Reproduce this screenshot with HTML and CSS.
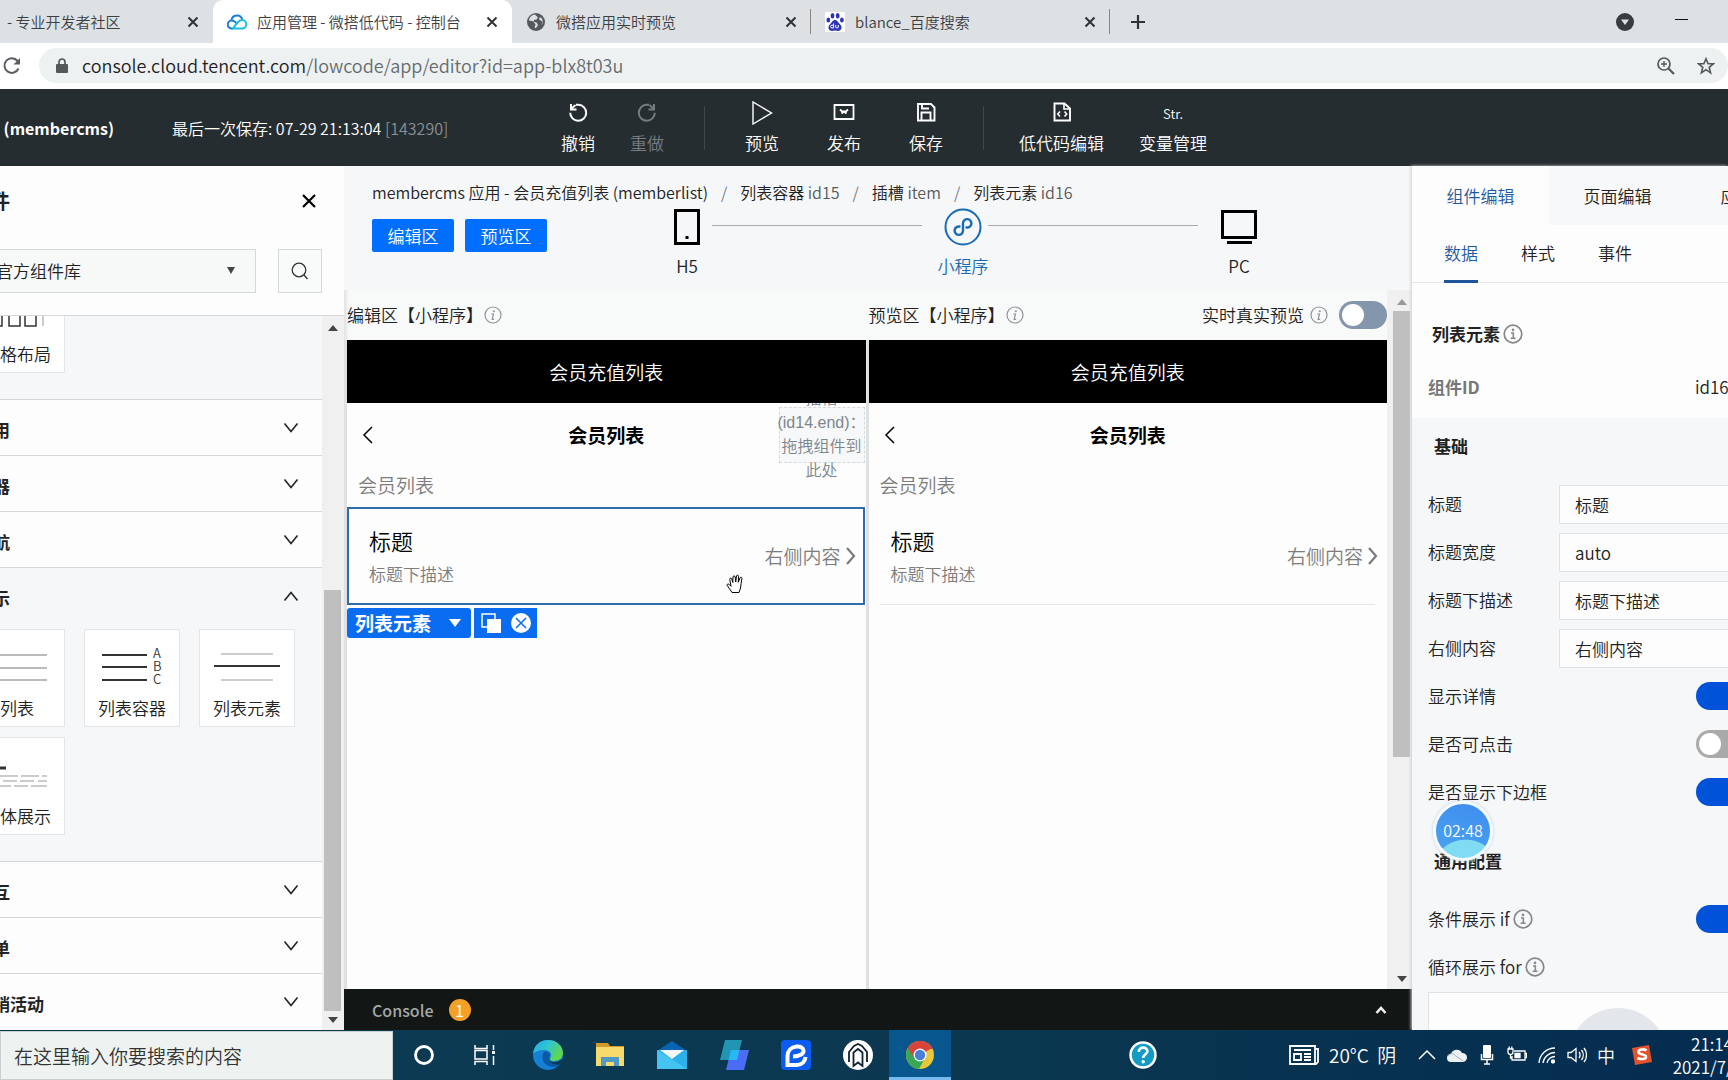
FILE: index.html
```html
<!DOCTYPE html>
<html lang="zh-CN">
<head>
<meta charset="utf-8">
<title>应用管理 - 微搭低代码 - 控制台</title>
<link rel="stylesheet" href="styles.css">
</head>
<body>
<svg class="defs" aria-hidden="true">
  <symbol id="i-close" viewBox="0 0 16 16"><path d="M3.500 3.500l9 9M12.500 3.500l-9 9" fill="none" stroke="currentColor" stroke-width="2"/></symbol>
  <symbol id="i-down" viewBox="0 0 16 16"><path d="M1.500 3.500L8 11.500l6.500-8" fill="none" stroke="currentColor" stroke-width="1.600"/></symbol>
  <symbol id="i-up" viewBox="0 0 16 16"><path d="M1.500 12.500L8 4.500l6.500 8" fill="none" stroke="currentColor" stroke-width="1.600"/></symbol>
  <symbol id="i-info" viewBox="0 0 18 18"><circle cx="9" cy="9" r="8" fill="none" stroke="currentColor" stroke-width="1.200"/><circle cx="9.800" cy="5.200" r="1" fill="currentColor"/><path d="M7.300 8h2.200l-1.300 5.300h2" fill="none" stroke="currentColor" stroke-width="1.200"/></symbol>
  <symbol id="i-info-b" viewBox="0 0 20 20"><circle cx="10" cy="10" r="8.800" fill="none" stroke="currentColor" stroke-width="1.700"/><circle cx="10" cy="5.900" r="1.300" fill="currentColor"/><path d="M8 9h2.300v5.200M7.600 14.300h5" fill="none" stroke="currentColor" stroke-width="1.600"/></symbol>
  <symbol id="i-back" viewBox="0 0 12 18"><path d="M10 1L2 9l8 8" fill="none" stroke="currentColor" stroke-width="1.500"/></symbol>
  <symbol id="i-more" viewBox="0 0 12 20"><path d="M2 2l7 8-7 8" fill="none" stroke="currentColor" stroke-width="2.200"/></symbol>
</svg>

<header class="browser">
  <div class="tabs">
    <div class="tab first"><span class="tab-name">- 专业开发者社区</span><button class="x" aria-label="关闭"><svg><use href="#i-close"/></svg></button></div>
    <div class="tab active">
      <svg class="fav" viewBox="0 0 20 20" fill="none" stroke-width="2"><path d="M6 16.500H5a4 4 0 0 1-.5-8 5.500 5.500 0 0 1 10.800-1" stroke="#1b7fd8"/><path d="M5 8.500c2 0 3.500 1.500 5.500 3.500" stroke="#1b7fd8"/><path d="M6 16.500h9a4.300 4.300 0 0 0 0-8.600c-2 0-3.300 1.300-4.500 2.600z" stroke="#19c0d8"/></svg>
      <span class="tab-name">应用管理 - 微搭低代码 - 控制台</span><button class="x" aria-label="关闭"><svg><use href="#i-close"/></svg></button></div>
    <div class="tab sep">
      <svg class="fav" viewBox="0 0 20 20"><circle cx="10" cy="10" r="9" fill="#55595c"/><path d="M9 2.500C5 3 3 6 3 8.500l4 .8 2.500 3L8.500 16c2 .5 3-2 3.500-3l-1.500-2.500-3-.8L8 8l2.500-.5 1.500-2zM14 5l-1 2.500 3.500 2-1 3.500c2-2 2-6-1.500-8z" fill="#dde1e4"/></svg>
      <span class="tab-name">微搭应用实时预览</span><button class="x" aria-label="关闭"><svg><use href="#i-close"/></svg></button></div>
    <div class="tab sep">
      <svg class="fav" viewBox="0 0 20 20"><path d="M0 0h20v20H0z" fill="#fff"/><g fill="#2a35b8"><ellipse cx="7.500" cy="3.700" rx="1.900" ry="2.700"/><ellipse cx="12.700" cy="3.700" rx="1.900" ry="2.700"/><ellipse cx="3.300" cy="8" rx="1.900" ry="2.500"/><ellipse cx="16.900" cy="8" rx="1.900" ry="2.500"/><path d="M10 8c2.500 0 3 2.500 5 4.300 2.500 2.200 1.800 6-1 6.500-1.500.3-2.500-.3-4-.3s-2.500.6-4 .3c-2.800-.5-3.500-4.300-1-6.500C7 10.500 7.500 8 10 8z"/></g><path d="M8.600 11.500V16H7a1.300 1.300 0 0 1 0-2.800h1.600M10.800 13v2.200c0 1 2.500 1 2.500 0V13" fill="none" stroke="#fff"/></svg>
      <span class="tab-name">blance_百度搜索</span><button class="x" aria-label="关闭"><svg><use href="#i-close"/></svg></button></div>
    <button class="new-tab" aria-label="新标签页"><svg viewBox="0 0 16 16"><path d="M8 1v14M1 8h14" stroke="#303336" stroke-width="2.200"/></svg></button>
    <div class="win">
      <svg class="s18" viewBox="0 0 18 18"><circle cx="9" cy="9" r="9" fill="#383c40"/><path d="M5 6.500h8L9 12z" fill="#dde1e4"/></svg>
      <svg class="s14" viewBox="0 0 14 14"><path d="M0 4.500h13" stroke="#111"/></svg>
    </div>
  </div>
  <div class="address">
    <button class="reload" aria-label="重新加载"><svg class="s20" viewBox="0 0 20 20"><path d="M16.500 12.500a7.300 7.300 0 1 1-1-7.500l1.500 1.500" fill="none" stroke="#5a5e62" stroke-width="2"/><path d="M18 2v6.500h-6.500z" fill="#5a5e62"/></svg></button>
    <div class="omni">
      <svg class="lock" viewBox="0 0 12 16"><path d="M1 6h10a1 1 0 0 1 1 1v7a1 1 0 0 1-1 1H1a1 1 0 0 1-1-1V7a1 1 0 0 1 1-1z" fill="#54585b"/><path d="M3 6V4a3 3 0 0 1 6 0v2" fill="none" stroke="#54585b" stroke-width="1.700"/></svg>
      <span class="url"><b>console.cloud.tencent.com</b>/lowcode/app/editor?id=app-blx8t03u</span>
      <svg class="s18" viewBox="0 0 18 18" fill="none" stroke="#54585b"><circle cx="7" cy="7" r="6" stroke-width="1.700"/><path d="M11.500 11.500L17 17" stroke-width="2.200"/><path d="M4 7h6M7 4v6" stroke-width="1.300"/></svg>
      <svg class="s18" viewBox="0 0 18 18"><path d="M9 1.800l2.100 5h5.200l-4.100 3.500 1.400 5.600L9 12.700l-4.600 3.200 1.400-5.600L1.700 6.800h5.200z" fill="none" stroke="#54585b" stroke-width="1.600"/></svg>
    </div>
  </div>
</header>

<div class="app-bar">
  <div class="app-info"><strong>会员后台 (membercms)</strong><span>最后一次保存: 07-29 21:13:04 <i>[143290]</i></span></div>
  <nav class="tools">
    <button><svg viewBox="0 0 22 22" fill="none" stroke="currentColor" stroke-width="2"><path d="M9 3.800h2.500a8 8 0 1 1-8.300 8"/><path d="M4 3v5.500h5.500"/><path d="M4 8L8.500 4"/></svg>撤销</button>
    <button disabled><svg viewBox="0 0 22 22" fill="none" stroke="currentColor" stroke-width="2"><path d="M13 3.800h-2.500a8 8 0 1 0 8.300 8"/><path d="M18 3v5.500h-5.500"/><path d="M18 8l-4.500-4"/></svg>重做</button>
    <span class="rule"></span>
    <button><svg class="big" viewBox="0 0 24 24" fill="none" stroke="currentColor" stroke-width="1.400"><path d="M3 1v22l18.500-11z"/></svg>预览</button>
    <button class="mid"><svg viewBox="0 0 22 22" fill="none" stroke="currentColor" stroke-width="1.800"><path d="M1.500 4h19v14h-19z"/><path d="M7 8.500l2 1.800h4l2-1.800M8.500 12.500l2.500-2 2.500 2"/></svg>发布</button>
    <button class="mid"><svg viewBox="0 0 22 22" fill="none" stroke="currentColor" stroke-width="1.900"><path d="M3 3h13l3.500 3.500V19.500H3z"/><path d="M6.500 19v-7.500h9V19M7 3v4.500h7"/></svg>保存</button>
    <span class="rule end"></span>
    <button><svg viewBox="0 0 22 22" fill="none" stroke="currentColor" stroke-width="1.900"><path d="M3.500 2.500h10L19 7.500v12H3.500z"/><path d="M13 3v5h5.500M9 10.500L6.800 13 9 15.500M13.500 10.500l2.200 2.500-2.200 2.500" stroke-width="1.600"/></svg>低代码编辑</button>
    <button><span class="str">Str.</span>变量管理</button>
  </nav>
</div>

<div class="workspace">
  <aside class="library">
    <div class="library-in">
      <div class="lib-head"><h2>组件</h2><button class="plain" aria-label="关闭"><svg class="s20" viewBox="0 0 20 20"><path d="M4 4l12 12M16 4L4 16" stroke="#000" stroke-width="2.200"/></svg></button></div>
      <div class="lib-find">
        <div class="pick"><select aria-label="组件库"><option>官方组件库</option></select><svg viewBox="0 0 8 8"><path d="M0 0h8L4 7z" fill="#444"/></svg></div>
        <button class="find" aria-label="搜索"><svg class="s18" viewBox="0 0 18 18" fill="none" stroke="#333" stroke-width="1.300"><circle cx="8" cy="8" r="6.800"/><path d="M12.800 12.800L16.500 17"/></svg></button>
      </div>
      <div class="lib-body">
        <div class="lib-scroll">
          <section class="group open">
            <div class="cards">
              <div class="card"><svg viewBox="0 0 72 46" fill="none"><path d="M10 4h11v34H10zM28 4h11v34H28zM44 4h11v34H44z" stroke="#333" stroke-width="1.500"/><path d="M62 4v34" stroke="#bbb" stroke-width="1.500"/></svg>栅格布局</div>
            </div>
          </section>
          <section class="group"><h3>通用<svg><use href="#i-down"/></svg></h3></section>
          <section class="group"><h3>容器<svg><use href="#i-down"/></svg></h3></section>
          <section class="group"><h3>导航<svg><use href="#i-down"/></svg></h3></section>
          <section class="group open"><h3>展示<svg><use href="#i-up"/></svg></h3>
            <div class="cards">
              <div class="card"><svg viewBox="0 0 72 46" stroke="#bbb" stroke-width="2"><path d="M4 13h62M4 26h62M4 38h62"/></svg>列表</div>
              <div class="card"><svg viewBox="0 0 72 46" stroke="#333" stroke-width="2"><path d="M6 13h45M6 25h45M6 38h45"/><g fill="#333" stroke="none" class="abc"><text x="57" y="16">A</text><text x="57" y="29">B</text><text x="57" y="42">C</text></g></svg>列表容器</div>
              <div class="card"><svg viewBox="0 0 72 46" stroke-width="2"><path d="M10 12h52M10 38h52" stroke="#ccc"/><path d="M3 24h66" stroke="#333"/></svg>列表元素</div>
              <div class="card"><svg viewBox="0 0 72 46" fill="none" stroke="#bbb" stroke-width="1.500"><path d="M6 18h19" stroke="#333" stroke-width="3"/><path d="M6 26h31M40 26h18M61 26h5M6 31h13M22 31h14M39 31h14M57 31h9M6 36h10M18 36h12M33 36h14M50 36h16"/></svg>媒体展示</div>
            </div>
          </section>
          <section class="group"><h3>交互<svg><use href="#i-down"/></svg></h3></section>
          <section class="group"><h3>表单<svg><use href="#i-down"/></svg></h3></section>
          <section class="group"><h3>营销活动<svg><use href="#i-down"/></svg></h3></section>
        </div>
        <div class="bar"><svg viewBox="0 0 10 6"><path d="M0 6l5-6 5 6z" fill="#444"/></svg><span class="thumb low"></span><svg viewBox="0 0 10 6"><path d="M0 0l5 6 5-6z" fill="#444"/></svg></div>
      </div>
    </div>
  </aside>

  <main class="stage">
    <div class="stage-head">
      <nav class="crumbs"><a href="#">membercms 应用 - 会员充值列表 (memberlist)</a><i>/</i><a href="#">列表容器 <em>id15</em></a><i>/</i><a href="#">插槽 <em>item</em></a><i>/</i><a href="#">列表元素 <em>id16</em></a></nav>
      <div class="modes">
        <div class="switches"><button>编辑区</button><button>预览区</button></div>
        <div class="devices">
          <div class="device"><svg viewBox="0 0 40 38"><path d="M8.500 2.500h23v33h-23z" fill="none" stroke="#000" stroke-width="3"/><path d="M18.500 28h3v3h-3z"/></svg>H5</div>
          <span class="wire"></span>
          <div class="device on"><svg viewBox="0 0 40 38" fill="none" stroke="currentColor"><circle cx="20" cy="19" r="17.500" stroke-width="2"/><path d="M16.500 18.500a4.200 4.200 0 1 0 3.500 4.300v-7.600a4.200 4.200 0 1 1 3.500 4.300" stroke-width="2.400" stroke-linecap="round"/></svg>小程序</div>
          <span class="wire"></span>
          <div class="device"><svg viewBox="0 0 40 38" fill="none" stroke="#000" stroke-width="3"><path d="M3.500 3.500h33v26h-33zM8 34.500h25"/></svg>PC</div>
        </div>
      </div>
    </div>
    <div class="canvas">
      <div class="panes">
        <section class="pane">
          <div class="pane-head">编辑区【小程序】<svg class="s18"><use href="#i-info"/></svg></div>
          <div class="phone">
            <div class="phone-top">会员充值列表</div>
            <div class="phone-body">
              <div class="navbar"><svg class="back"><use href="#i-back"/></svg><b>会员列表</b><div class="slot"><p>插槽(id14.end)：拖拽组件到此处</p></div></div>
              <p class="list-name">会员列表</p>
              <div class="item picked">
                <div><h4>标题</h4><p>标题下描述</p></div><span>右侧内容<svg><use href="#i-more"/></svg></span>
                <svg class="hand" viewBox="0 0 20 20"><path d="M6 18.500C4.500 16 2.500 13.500 1.200 11.500c-.6-1.200.8-2 1.800-1.200l2 2L3.800 5.500c-.2-1.500 1.600-1.800 2-.5l1 3.500L7 3c.1-1.500 2-1.500 2.200 0l.5 5 .8-6c.3-1.300 2-1 2 .3l-.2 6 1.700-4.500c.5-1.200 2.200-.6 1.900.7-.7 3.500-.8 6-1.400 9.500l-1.500 4.500z" fill="#fff" stroke="#000"/></svg>
                <div class="tag"><button class="tag-name">列表元素<svg viewBox="0 0 12 8"><path d="M0 0h12L6 8z" fill="#fff"/></svg></button><div class="tag-acts"><button aria-label="复制"><svg viewBox="0 0 20 20"><path d="M1 1h13v13H1z" fill="none" stroke="#fff" stroke-width="1.500"/><path d="M6 6h14v14H6z" fill="#fff"/></svg></button><button aria-label="删除"><svg viewBox="0 0 20 20"><circle cx="10" cy="10" r="10" fill="#fff"/><path d="M5 5l10 10M15 5L5 15" stroke="#0a6cf0" stroke-width="1.500"/></svg></button></div></div>
              </div>
            </div>
          </div>
        </section>
        <section class="pane">
          <div class="pane-head">预览区【小程序】<svg class="s18"><use href="#i-info"/></svg><label class="live">实时真实预览<svg class="s18"><use href="#i-info"/></svg><input type="checkbox" class="toggle"></label></div>
          <div class="phone">
            <div class="phone-top">会员充值列表</div>
            <div class="phone-body">
              <div class="navbar"><svg class="back"><use href="#i-back"/></svg><b>会员列表</b></div>
              <p class="list-name">会员列表</p>
              <div class="item lined"><div><h4>标题</h4><p>标题下描述</p></div><span>右侧内容<svg><use href="#i-more"/></svg></span></div>
            </div>
          </div>
        </section>
      </div>
      <div class="bar wide"><svg viewBox="0 0 10 6"><path d="M0 6l5-6 5 6z" fill="#999"/></svg><span class="thumb high"></span><svg viewBox="0 0 10 6"><path d="M0 0l5 6 5-6z" fill="#444"/></svg></div>
    </div>
    <footer class="console"><span>Console</span><b>1</b><svg viewBox="0 0 12 12"><path d="M1.500 9L6 4l4.500 5" fill="none" stroke="#eee" stroke-width="2.600"/></svg></footer>
  </main>

  <aside class="props">
    <div class="props-in">
      <nav class="ptabs"><button class="on">组件编辑</button><button>页面编辑</button><button>应用编辑</button></nav>
      <nav class="stabs"><button class="on">数据</button><button>样式</button><button>事件</button></nav>
      <div class="ident"><h3>列表元素<svg class="s20"><use href="#i-info-b"/></svg></h3><p><b>组件ID</b><span>id16</span></p></div>
      <form class="fields">
        <h3>基础</h3>
        <label class="row">标题<input type="text" value="标题"></label>
        <label class="row">标题宽度<input type="text" value="auto"></label>
        <label class="row">标题下描述<input type="text" value="标题下描述"></label>
        <label class="row">右侧内容<input type="text" value="右侧内容"></label>
        <label class="row">显示详情<input type="checkbox" class="toggle" checked></label>
        <label class="row">是否可点击<input type="checkbox" class="toggle"></label>
        <label class="row">是否显示下边框<input type="checkbox" class="toggle" checked></label>
        <h3>通用配置</h3>
        <label class="row"><span>条件展示 if <svg class="s20"><use href="#i-info-b"/></svg></span><input type="checkbox" class="toggle" checked></label>
        <div class="row tight"><span>循环展示 for <svg class="s20"><use href="#i-info-b"/></svg></span></div>
        <div class="loop"><svg viewBox="0 0 100 100"><circle cx="50" cy="50" r="50" fill="#e3e7ec"/></svg></div>
      </form>
    </div>
  </aside>
</div>

<div class="timer">02:48</div>

<footer class="taskbar">
  <input type="text" aria-label="搜索" value="在这里输入你要搜索的内容">
  <div class="apps">
    <button aria-label="Cortana"><svg viewBox="0 0 32 32"><circle cx="16" cy="16" r="8.500" fill="none" stroke="#fff" stroke-width="2.800"/></svg></button>
    <button aria-label="任务视图"><svg viewBox="0 0 32 32" fill="none" stroke="#fff" stroke-width="1.500"><path d="M5 6v3.500h12V6M5 26v-3.500h12V26M5 11.500h12v8.500H5zM23.500 6v5M23.500 17v9"/><path d="M22 12h3v3h-3z" fill="#fff" stroke="none"/></svg></button>
    <button aria-label="Edge"><svg viewBox="0 0 32 32"><defs><linearGradient id="e1" x1="0" y1="0" x2="1" y2=".5"><stop offset="0" stop-color="#2aa7e8"/><stop offset=".5" stop-color="#31c5d0"/><stop offset="1" stop-color="#60d84b"/></linearGradient></defs><circle cx="16" cy="16" r="15" fill="#1580d6"/><path d="M1 15C2 6 8 1 16 1c9 0 15 6 15 13 0 5-4 8-9 8-4 0-5-2-3.500-3.500 2-2.500 0-7.500-6-7.500-5 0-9.500 1.500-11.500 4z" fill="url(#e1)"/><path d="M12 13c-4 6 0 14 8 15 4 .3 7-1.500 9-4-4 2-11 1-12-4-.5-2 .5-3 1-3.500 0-3-3-5-6-3.500z" fill="#0c59a4"/><path d="M18 18c-2 2 0 5 4 5 3 0 6-1 8.500-3.500L29 25c-4 1.500-10 .5-12-4z" fill="#0b3a52"/></svg></button>
    <button aria-label="文件资源管理器"><svg viewBox="0 0 32 32"><path d="M2 4h12l2 3h14v9H2z" fill="#d59b28"/><path d="M2 8h28v19H2z" fill="#f8d96b"/><path d="M7 27v-9h18v9h-5v-4h-8v4z" fill="#4f9bc6"/></svg></button>
    <button aria-label="邮件"><svg viewBox="0 0 32 32"><path d="M1 12L16 2l15 10z" fill="#0a64b4"/><path d="M1 11h30v19H1z" fill="#2bb0ea"/><path d="M1 11l30 19H1z" fill="#45c4f4"/><path d="M4 11h24L16 20z" fill="#f2f7fa"/></svg></button>
    <button aria-label="低代码"><svg viewBox="0 0 32 32"><path d="M7 1h17l-5 20H2z" fill="#2395b3"/><path d="M13 11h18l-5 20H8z" fill="#4c6cf5"/><path d="M13 11h8.500L19 21h-8.500z" fill="#26b9f3"/></svg></button>
    <button aria-label="浏览器"><svg viewBox="0 0 32 32"><rect x="1" y="1" width="30" height="30" rx="4" fill="#0a5df0"/><path d="M13 17.500c6 0 11-2.500 10.500-6-.4-3-3.500-4.500-7-4C11 8 7.500 12 7.500 17v9H17c5 0 8-3.500 8.500-8" fill="none" stroke="#fff" stroke-width="4"/></svg></button>
    <button aria-label="阅读"><svg viewBox="0 0 32 32"><circle cx="16" cy="16" r="15" fill="#fff"/><path d="M7 23V13l5-6 4-2 4 2 5 6v10M11.500 27V13.500L16 10l4.500 3.500V27L16 23.500z" fill="none" stroke="#123" stroke-width="1.800"/></svg></button>
    <button class="on" aria-label="Chrome"><svg viewBox="0 0 32 32"><circle cx="16" cy="16" r="14" fill="#e9c63c"/><path d="M16 16L3.900 9A14 14 0 0 1 28.100 9z" fill="#d8443a"/><path d="M3.900 9A14 14 0 0 0 15 30l6-11-5-3z" fill="#3aa757"/><path d="M3.900 9L10 19l6-9h12.500A14 14 0 0 0 3.900 9z" fill="#d8443a"/><circle cx="16" cy="16" r="6.500" fill="#fff"/><circle cx="16" cy="16" r="5.200" fill="#4a7fd8"/></svg></button>
  </div>
  <svg class="help" viewBox="0 0 28 28"><circle cx="14" cy="14" r="12.500" fill="#149bc4" stroke="#fff" stroke-width="2.500"/><path d="M9.800 11c0-6 8.600-5.500 8.600-.7 0 3-4.200 3.200-4.200 6.700" fill="none" stroke="#fff" stroke-width="2.600"/><circle cx="14.200" cy="20.800" r="1.700" fill="#fff"/></svg>
  <div class="tray">
    <svg class="news" viewBox="0 0 30 20" fill="none" stroke="#fff" stroke-width="1.800"><path d="M1 1h25v18H1zM26 4h3v13l-2 2H4M5 5h17M5 9h7v6H5zM15 9h7M15 12h7M15 15h7"/></svg>
    <span class="weather">20°C&nbsp; 阴</span>
    <svg viewBox="0 0 20 20" fill="none" stroke="#fff" stroke-width="1.500"><path d="M2 14l8-8 8 8"/></svg>
    <svg viewBox="0 0 20 20"><path d="M4 17a4 4 0 0 1 0-8 6 6 0 0 1 11-1 4.500 4.500 0 0 1 1 9z" fill="#eef1f4"/><path d="M1 11c3-4 6-2 8 0l7 5" fill="none" stroke="#a9b4bd"/></svg>
    <svg viewBox="0 0 20 20"><rect x="6" y="0" width="8" height="13" rx="1" fill="#fff"/><path d="M4.500 9v5.500h11V9M10 14v5M7 19h6" fill="none" stroke="#fff" stroke-width="1.500"/></svg>
    <svg viewBox="0 0 20 20" fill="none" stroke="#fff" stroke-width="1.300"><path d="M7 6h11v9H5v-4M18 8.500h1.500v4H18M1 4h5v3a2.500 2.500 0 0 1-5 0zM2.200 4V1.500M4.800 4V1.500M3.500 9.500V13H5"/><path d="M8 8.500h5v4H8z" fill="#fff"/></svg>
    <svg viewBox="0 0 20 20" fill="none" stroke="#fff" stroke-width="1.300"><path d="M2 18A16 16 0 0 1 18 3M6 18A12 12 0 0 1 18 7.500M10 18a8 8 0 0 1 8-6.500"/><circle cx="16" cy="16.500" r="1.500" fill="#fff"/></svg>
    <svg viewBox="0 0 20 20" fill="none" stroke="#fff" stroke-width="1.300"><path d="M1 7.500h3l5-4v13l-5-4H1zM12 7a5 5 0 0 1 0 6M14.500 5a8 8 0 0 1 0 10M17 3a11 11 0 0 1 0 14"/></svg>
    <span class="ime">中</span>
    <svg class="sogou" viewBox="0 0 22 22"><path d="M1 4l17-3 3 17-17 3z" fill="#e2532c"/><path d="M15.500 6.500c-3-2-8-1-8 1.500 0 3 7.500 2 7.500 4.700 0 2.600-5 3-8.500 1.300" fill="none" stroke="#fff" stroke-width="2.600"/></svg>
    <time class="clock">21:14<br>2021/7/29</time>
  </div>
</footer>
</body>
</html>
```
FILE: styles.css
```css
* { box-sizing: border-box; }
html, body { height: 100%; }
body {
  margin: 0; display: flex; flex-direction: column; overflow: hidden;
  font-family: "Noto Sans CJK SC", "Noto Sans", sans-serif;
  font-size: 17px; line-height: 24px; font-weight: 350; color: #222; background: #f5f7f9;
}
h2, h3, h4, p { margin: 0; font-size: inherit; }
i, em { font-style: normal; }
a { color: inherit; text-decoration: none; }
svg { display: block; flex: none; }
button, input, select { font: inherit; color: inherit; border: 0; background: none; padding: 0; margin: 0; border-radius: 0; }
.defs { position: absolute; width: 0; height: 0; }
.s14 { width: 14px; height: 14px; }
.s18 { width: 18px; height: 18px; }
.s20 { width: 20px; height: 20px; }

/* browser chrome */
.browser { flex: none; background: #fff; }
.tabs { display: flex; height: 43px; background: #dde1e4; color: #3c4043; font-size: 15px; }
.tab { display: flex; align-items: center; width: 299px; padding: 0 12px 0 14px; gap: 10px; }
.tab.first { width: 213px; padding-left: 7px; border-bottom-right-radius: 10px; }
.tab.active { background: #fff; border-radius: 10px 10px 0 0; }
.tab.sep { background: linear-gradient(#888, #888) right center / 1px 25px no-repeat; }
.tab-name { flex: 1; white-space: nowrap; }
.fav { width: 20px; height: 20px; }
.x, .x svg { width: 16px; height: 16px; color: #303336; }
.new-tab { width: 56px; padding: 0 20px; }
.new-tab svg { width: 16px; height: 16px; }
.win { display: flex; align-items: center; gap: 41px; margin-left: auto; padding-right: 39px; }
.address { display: flex; align-items: center; height: 46px; padding-bottom: 1px; }
.reload { width: 39px; padding-left: 2px; }
.omni { flex: 1; display: flex; align-items: center; height: 35px; padding: 0 13px 0 17px; gap: 22px; border-radius: 18px; background: #edf1f1; }
.lock { width: 12px; height: 16px; margin-right: -8px; }
.url { flex: 1; padding-bottom: 2px; font-size: 18px; color: #666b6e; }
.url b { font-weight: inherit; color: #1d2124; }

/* application bar */
.app-bar { flex: none; display: grid; grid-template-columns: 561px 1fr; height: 77px; background: #262d30; color: #fff; white-space: nowrap; }
.app-info { display: flex; align-items: center; gap: 58px; font-size: 16px; }
.app-info strong { width: 114px; display: flex; justify-content: flex-end; font-weight: 700; }
.app-info i { color: #8b9093; }
.tools { display: flex; align-items: center; gap: 35px; }
.tools button { display: flex; flex-direction: column; align-items: center; height: 54px; gap: 8px; }
.tools button:disabled { color: #777c7f; }
.tools svg { width: 22px; height: 22px; }
.tools svg.big { width: 24px; height: 24px; margin-bottom: -2px; }
.tools .mid { margin-left: 13px; }
.rule { width: 1px; height: 44px; margin: 0 5px; background: #41484b; }
.rule.end { margin-right: 0; }
.str { height: 22px; font-size: 13px; line-height: 26px; }

/* workspace */
.workspace { flex: 1; min-height: 0; display: flex; }
.library { flex: none; width: 344px; overflow: hidden; background: #fdfdfd; }
.library-in { display: flex; flex-direction: column; height: 100%; margin-left: -54px; }
.lib-head { display: flex; align-items: center; justify-content: space-between; height: 69px; padding: 0 25px 0 24px; }
.lib-head h2 { font-size: 20px; font-weight: 700; }
.lib-find { display: flex; gap: 22px; padding: 14px 22px 22px 30px; border-bottom: 1px solid #d3d7da; }
.pick { flex: 1; display: flex; align-items: center; height: 44px; padding-right: 20px; border: 1px solid #d5d8da; background: #f7f8f8; }
.pick select { flex: 1; height: 42px; padding-left: 19px; appearance: none; }
.pick svg { width: 8px; height: 8px; }
.find { display: flex; align-items: center; justify-content: center; width: 44px; height: 44px; border: 1px solid #d5d8da; background: #f9fafa; }
.lib-body { flex: 1; min-height: 0; display: flex; }
.lib-scroll { flex: 1; display: flex; flex-direction: column; justify-content: flex-end; overflow: hidden; padding-bottom: 1px; }
.group { flex: none; border-top: 1px solid #d3d7da; background: #fdfdfd; }
.group.open { background: #f5f7f9; }
.group h3 { display: flex; align-items: center; justify-content: space-between; height: 55px; padding: 4px 23px 0 30px; font-weight: 700; }
.group h3 svg { width: 16px; height: 16px; margin-bottom: 4px; }
.cards { display: grid; grid-template-columns: repeat(3, 96px); gap: 10px 19px; padding: 6px 0 26px 23px; }
.card { display: flex; flex-direction: column; align-items: center; height: 98px; padding-top: 12px; gap: 8px; border: 1px solid #e3e6e8; background: #fff; white-space: nowrap; }
.card svg { width: 72px; height: 46px; }
.abc { font-size: 13px; }
.bar { display: flex; flex-direction: column; align-items: center; justify-content: space-between; width: 22px; padding: 9px 3px 7px 2px; background: #f0f0f0; }
.bar svg { width: 10px; height: 6px; }
.thumb { width: 17px; background: #bfbfbf; }
.low { height: 421px; margin: auto 0 6px; }
.high { height: 446px; margin: 6px 0 auto; }
.bar.wide { width: 25px; padding: 9px 2px 7px 6px; }

.stage { flex: 1; min-width: 0; display: flex; flex-direction: column; background: #f8f9f9; box-shadow: inset 3px 0 3px #e3e5e7; }
.stage-head { height: 124px; padding-left: 28px; padding-top: 14px; background: #f5f7f9; }
.crumbs { display: flex; gap: 13px; font-size: 16px; white-space: nowrap; }
.crumbs i { color: #777; }
.crumbs em { color: #55595c; }
.modes { display: flex; align-items: flex-start; padding-top: 4px; }
.switches { display: flex; gap: 11px; padding-top: 11px; }
.switches button { width: 82px; height: 33px; border-radius: 2px; background: #006eff; color: #fff; }
.devices { flex: 1; display: flex; padding: 0 148px 0 115px; }
.device { display: flex; flex-direction: column; align-items: center; width: 50px; gap: 8px; white-space: nowrap; }
.device svg { width: 40px; height: 38px; }
.device.on { color: #1a6bb3; }
.wire { flex: 1; height: 1px; margin: 17px 16px 0 0; background: #a9adb0; }
.canvas { flex: 1; min-height: 0; display: flex; }
.panes { flex: 1; display: flex; gap: 3px; padding-left: 3px; }
.pane { flex: 1; display: flex; flex-direction: column; }
.pane-head { display: flex; align-items: center; height: 50px; gap: 1px; }
.live { display: flex; align-items: center; gap: 6px; margin-left: auto; }
.live .toggle { margin-left: 5px; }
.pane-head svg { color: #8d949a; }
.phone { flex: 1; display: flex; flex-direction: column; background: #fdfdfd; box-shadow: 3px 0 0 #dfe0e1, -3px 0 0 #dfe0e1; }
.pane:last-child .phone { box-shadow: none; }
.phone-top { height: 63px; line-height: 64px; text-align: center; font-size: 19px; color: #fff; background: #000; }
.phone-body { flex: 1; overflow: hidden; font-size: 19px; }
.navbar { display: grid; grid-template-columns: 1fr auto 1fr; align-items: center; height: 64px; padding: 0 15px; color: #000; }
.navbar b { font-weight: 700; }
.back { width: 12px; height: 18px; }
.slot { justify-self: end; display: flex; flex-direction: column; justify-content: center; width: 86px; height: 56px; margin-right: -14px; border: 1px dashed #d3dade; background: #f6f8f9; color: #7d868c; font: 350 16px/24px "Liberation Sans", "Noto Sans CJK SC", sans-serif; text-align: center; }
.slot p { flex: none; margin: 0 -4px; }
.list-name { padding: 6px 11px 10px; color: #7c7c7c; }
.item { position: relative; display: flex; align-items: center; justify-content: space-between; height: 98px; margin-right: 1px; padding: 0 9px 0 22px; }
.item h4 { font-size: 22px; font-weight: inherit; line-height: 28px; color: #000; }
.item p { padding-top: 8px; font-size: 17px; color: #7c7c7c; }
.item > span { display: flex; align-items: center; gap: 4px; color: #7c7c7c; }
.item > span svg { width: 12px; height: 20px; }
.picked { border: 2px solid #2d6ca8; padding: 0 6px 0 20px; }
.lined { padding-right: 7px; }
.lined::after { content: ""; position: absolute; left: 11px; right: 11px; bottom: 0; border-bottom: 1px solid #e4e6e8; }
.hand { position: absolute; right: 117px; bottom: 9px; width: 20px; height: 20px; }
.tag { position: absolute; left: -2px; top: 99px; display: flex; gap: 3px; color: #fff; }
.tag-name { display: flex; align-items: center; justify-content: space-between; width: 124px; height: 30px; padding: 0 10px 0 8px; border-radius: 3px; background: #0a6cf0; font-weight: 700; }
.tag-name svg { width: 12px; height: 8px; }
.tag-acts { display: flex; align-items: center; justify-content: center; gap: 10px; width: 63px; background: #0a6cf0; }
.tag-acts svg { width: 20px; height: 20px; }
.console { display: flex; align-items: center; gap: 15px; height: 41px; padding: 0 25px 0 28px; background: #121615; color: #a5a9a8; font-size: 16px; font-weight: 500; }
.console b { width: 22px; height: 22px; border-radius: 50%; background: #f5a027; color: #fff; line-height: 22px; text-align: center; font-weight: 400; }
.console svg { width: 12px; height: 12px; margin-left: auto; }

.toggle { appearance: none; flex: none; width: 48px; height: 28px; padding: 3px; border-radius: 14px; background: #8496ab; }
.toggle::before { content: ""; display: block; width: 22px; height: 22px; border-radius: 50%; background: #fff; }

/* property panel */
.props { flex: none; width: 316px; overflow: hidden; background: #fdfdfd; box-shadow: -1px 0 3px #ccd0d3; }
.props-in { width: 411px; }
.ptabs { display: flex; height: 59px; }
.ptabs button { width: 137px; background: #f7f8f9; }
.ptabs button.on { background: #fdfdfd; color: #1f5aa0; }
.stabs { display: flex; gap: 43px; height: 58px; padding-left: 32px; border-bottom: 1px solid #e3e6e8; }
.stabs button { height: 58px; border-bottom: 3px solid transparent; }
.stabs button.on { color: #1f5aa0; border-color: #20549b; }
.ident { height: 135px; padding: 39px 0 0 16px; }
.ident h3 { display: flex; align-items: center; gap: 3px; padding-left: 4px; font-weight: 700; }
.ident svg, .fields svg.s20 { color: #888; }
.ident p { display: flex; justify-content: space-between; margin-top: 29px; padding-right: 94px; }
.ident b { color: #777; font-weight: 700; }
.ident span { width: 34px; }
.fields { height: 620px; padding: 16px 0 0 16px; background: #f5f7f9; }
.fields h3 { padding-left: 6px; margin-bottom: 26px; font-weight: 700; }
.row { display: grid; grid-template-columns: 131px 1fr; align-items: center; height: 40px; margin-bottom: 8px; white-space: nowrap; }
.row > span { display: flex; align-items: center; gap: 3px; }
.row input[type="text"] { width: 100%; height: 39px; padding: 0 15px; border: 1px solid #e0e3e6; background: #fdfdfd; }
.fields .toggle { width: 66px; margin-left: 137px; background: #aaa; }
.fields .toggle:checked { background: #0052d9; }
.fields .toggle:checked::before { margin-left: 38px; }
.row + h3 { padding-top: 29px; }
.tight { margin-bottom: 5px; }
.loop { display: flex; justify-content: center; height: 200px; margin-right: 15px; padding-top: 15px; border: 1px solid #e0e3e6; background: #fdfdfd; }
.loop svg { width: 100px; height: 100px; }

.timer { position: absolute; right: 235px; bottom: 219px; width: 60px; height: 60px; border: 3px solid #f4fbff; border-radius: 50%; background: radial-gradient(circle at 55% 130%, #7fdcf2 0 34px, transparent 35px), linear-gradient(200deg, #3f8cf0, #4aa5ee); box-shadow: 0 0 3px #b8c8d8; color: #fff; font-size: 16px; line-height: 52px; text-align: center; }

/* taskbar */
.taskbar { flex: none; display: flex; align-items: center; height: 50px; background: linear-gradient(90deg, #0b3b53, #0b3850 55%, #042c50); color: #fff; }
.taskbar > input { width: 393px; height: 49px; padding: 0 13px; background: #eef3f2; border: 1px solid #c9cfcf; color: #333; font-size: 19px; }
.apps { display: flex; }
.apps button { width: 62px; height: 50px; padding: 0 15px; }
.apps button.on { background: #07568d; border-bottom: 3px solid #76b9ed; padding-top: 3px; }
.apps svg { width: 32px; height: 32px; }
.help { width: 28px; height: 28px; margin-left: 178px; }
.tray { display: flex; align-items: center; gap: 10px; width: 439px; margin-left: auto; }
.tray > * { flex: none; }
.tray svg { width: 20px; height: 20px; }
.tray svg.news { width: 30px; }
.weather { width: 78px; font-size: 19px; white-space: nowrap; }
.ime { width: 20px; font-size: 18px; }
.tray svg.sogou { width: 22px; height: 22px; margin-left: 4px; }
.clock { width: 80px; margin-left: 9px; font-size: 17px; line-height: 23px; text-align: center; }
```
